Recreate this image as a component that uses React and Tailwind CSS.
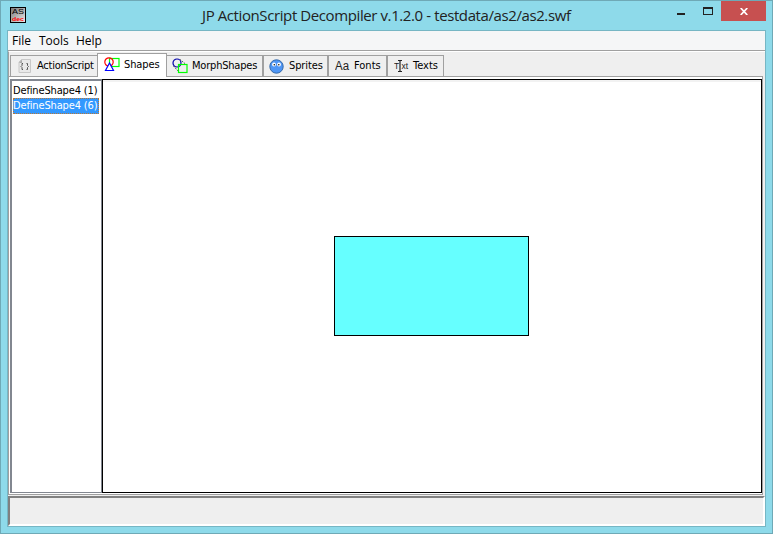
import React from "react";

const uiFont = "font-['DejaVu_Sans_Condensed','DejaVu_Sans',sans-serif] [font-stretch:condensed] text-[11px] leading-[14px]";
const segoe = "font-['Open_Sans',sans-serif]";

function AppIcon() {
  return (
    <svg width="16" height="16" viewBox="0 0 16 16">
      <defs>
        <linearGradient id="g" x1="0" y1="0" x2="1" y2="1">
          <stop offset="0" stopColor="#777" />
          <stop offset="1" stopColor="#eee" />
        </linearGradient>
      </defs>
      <rect x=".5" y=".5" width="15" height="15" fill="url(#g)" stroke="#000" />
      <text x="8" y="7.200" fontSize="8" textAnchor="middle" textLength="12" lengthAdjust="spacingAndGlyphs" fontFamily="Liberation Sans" fill="#000">AS</text>
      <text x="8" y="14.300" fontSize="5.500" fontWeight="bold" textAnchor="middle" textLength="12" lengthAdjust="spacingAndGlyphs" fontFamily="Liberation Sans" fill="#f00">dec</text>
    </svg>
  );
}

function ScriptIcon() {
  return (
    <svg width="13" height="14" viewBox="0 0 13 14">
      <path d="M1 3L3.500 .5H12.500V13.500H1Z" fill="#e9e9e9" stroke="#c8c8c8" />
      <path d="M1 4L4 .5V4Z" fill="#aaa" />
      <path d="M5 4.500H4V6.500L3 7.500L4 8.500V10.500H5M8.500 4.500H9.500V6.500L10.500 7.500L9.500 8.500V10.500H8.500" fill="none" stroke="#555" />
    </svg>
  );
}

function ShapesIcon() {
  return (
    <svg width="16" height="15" viewBox="0 0 16 15" fill="none" strokeWidth="1.200">
      <rect x="5.500" y="1.500" width="9.500" height="8" stroke="#0f0" />
      <circle cx="5" cy="5" r="4.200" stroke="#f00" />
      <path d="M5.500 6L1.500 13.500H9.500Z" fill="#fff" stroke="#00f" />
    </svg>
  );
}

function MorphIcon() {
  return (
    <svg width="16" height="16" viewBox="0 0 16 16" fill="none">
      <circle cx="5" cy="5" r="4" stroke="#00a" strokeWidth="1.200" />
      <path d="M1.500 8L6 13M8 1.500L13.500 6" stroke="#555" strokeDasharray="1.500 1" />
      <rect x="6.500" y="6.500" width="8.500" height="8" stroke="#0f0" strokeWidth="1.200" />
    </svg>
  );
}

function SpriteIcon() {
  return (
    <svg width="15" height="15" viewBox="0 0 15 15">
      <circle cx="7.500" cy="7.500" r="6.700" fill="#4f96f5" stroke="#376aa8" />
      <circle cx="5" cy="5.500" r="1.900" fill="#fff" />
      <circle cx="10" cy="5.500" r="1.900" fill="#fff" />
      <circle cx="5.300" cy="5.700" r=".8" fill="#111" />
      <circle cx="9.800" cy="5.700" r=".8" fill="#111" />
    </svg>
  );
}

function FontsIcon() {
  return (
    <svg width="15" height="14" viewBox="0 0 15 14">
      <text x="0" y="11" fontSize="12" fontFamily="Liberation Sans" textLength="14" lengthAdjust="spacingAndGlyphs" fill="#222">Aa</text>
    </svg>
  );
}

function TextsIcon() {
  return (
    <svg width="15" height="14" viewBox="0 0 15 14">
      <text x="0" y="10" fontSize="8.500" fontFamily="Liberation Sans" fill="#222">T</text>
      <text x="7.500" y="10" fontSize="8.500" fontFamily="Liberation Sans" textLength="6.500" fill="#222">xt</text>
      <path d="M4 1.500H8M4 12.500H8M6 1.500V12.500" stroke="#222" strokeWidth="1.200" />
    </svg>
  );
}

function Tab({ icon, label, box, text }) {
  return (
    <div className={`mt-[3px] flex h-[21px] shrink-0 items-center border border-b-0 border-[#a0a0a0] bg-[#efefef] ${box}`}>
      <span className="shrink-0">{icon}</span>
      <span className={`whitespace-nowrap ${uiFont} ${text}`}>{label}</span>
    </div>
  );
}

export default function App() {
  return (
    <div className="flex h-[534px] w-[773px] flex-col overflow-hidden border border-[#6fa9b6] bg-[#8edaea] px-[6px] pb-[6px] text-black">
      <header className="flex h-[29px] shrink-0 items-start">
        <div className="ml-[3px] mt-[6px] shrink-0"><AppIcon /></div>
        <h1 className={`ml-[176px] mt-[3px] w-[481px] shrink-0 whitespace-nowrap text-[15px] leading-[22px] tracking-[-0.4px] text-[#222] ${segoe}`}>
          JP ActionScript Decompiler v.1.2.0 - testdata/as2/as2.swf
        </h1>
        <div className="-ml-[6px] mt-[12px] h-[2px] w-[8px] shrink-0 bg-[#222]" />
        <div className="ml-[18px] mt-[6px] h-[8px] w-[10px] shrink-0 border border-t-2 border-[#222]" />
        <div className="ml-[8px] flex h-[20px] w-[45px] shrink-0 items-center justify-center bg-[#c75050]">
          <svg width="8" height="7" viewBox="0 0 8 7"><path d="M.7 0L7.300 7M7.300 0L.7 7" stroke="#fff" strokeWidth="1.700" /></svg>
        </div>
      </header>
      <div className="flex min-h-0 flex-1 flex-col border border-[#76b6c4] bg-[#efefef]">
        <nav className={`flex h-[20px] shrink-0 items-center border-b border-[#a0a0a0] bg-[#f5f6f7] pl-[4px] text-[12px] ${segoe}`}>
          <span className="w-[27px]">File</span>
          <span className="w-[37px]">Tools</span>
          <span>Help</span>
        </nav>
        <main className="flex h-[444px] shrink-0 flex-col border-l border-t border-l-[#a0a0a0] border-t-white">
          <div className="flex h-[24px] shrink-0 pl-px">
            <Tab icon={<ScriptIcon />} label="ActionScript" box="w-[87px] border-r-0 pl-[7px]" text="ml-[6px] tracking-[-0.25px]" />
            <div className="relative z-10 -mb-px mt-[1px] flex h-[24px] w-[70px] shrink-0 items-center border border-b-0 border-[#a0a0a0] bg-white pb-[2px] pl-[6px]">
              <ShapesIcon />
              <span className={`ml-[4px] tracking-[-0.1px] ${uiFont}`}>Shapes</span>
            </div>
            <Tab icon={<MorphIcon />} label="MorphShapes" box="w-[96px] border-l-0 pl-[5px]" text="ml-[4px] tracking-[-0.2px]" />
            <Tab icon={<SpriteIcon />} label="Sprites" box="w-[65px] pl-[5px]" text="ml-[5px] tracking-[-0.1px]" />
            <Tab icon={<FontsIcon />} label="Fonts" box="w-[59px] pl-[6px]" text="ml-[4px]" />
            <Tab icon={<TextsIcon />} label="Texts" box="w-[57px] pl-[6px]" text="ml-[4px]" />
          </div>
          <div className="mr-[2px] flex min-h-0 flex-1 border border-l-0 border-[#a0a0a0] bg-white pb-px pl-px pt-[2px]">
            <ul className={`w-[92px] shrink-0 border border-l-2 border-t-2 border-[#828790] bg-white pl-px pt-[2px] tracking-[-0.15px] ${uiFont}`}>
              <li className="h-[15px] whitespace-nowrap pt-px">DefineShape4 (1)</li>
              <li className="h-[16px] w-[86px] border border-dotted border-[#b87838] bg-[#3399ff] text-white">
                <span className="-ml-px block whitespace-nowrap">DefineShape4 (6)</span>
              </li>
            </ul>
            <div className="flex flex-1 border border-black bg-white">
              <div className="flex flex-1 border-t-2 border-[#f2f2f2] pl-[231px] pt-[154px]">
                <div className="h-[100px] w-[195px] border border-black bg-[#66ffff]" />
              </div>
            </div>
          </div>
        </main>
        <footer className="mt-px min-h-0 flex-1 border-2 border-b-white border-l-[#808080] border-r-white border-t-[#808080] bg-[#efefef]" />
      </div>
    </div>
  );
}
